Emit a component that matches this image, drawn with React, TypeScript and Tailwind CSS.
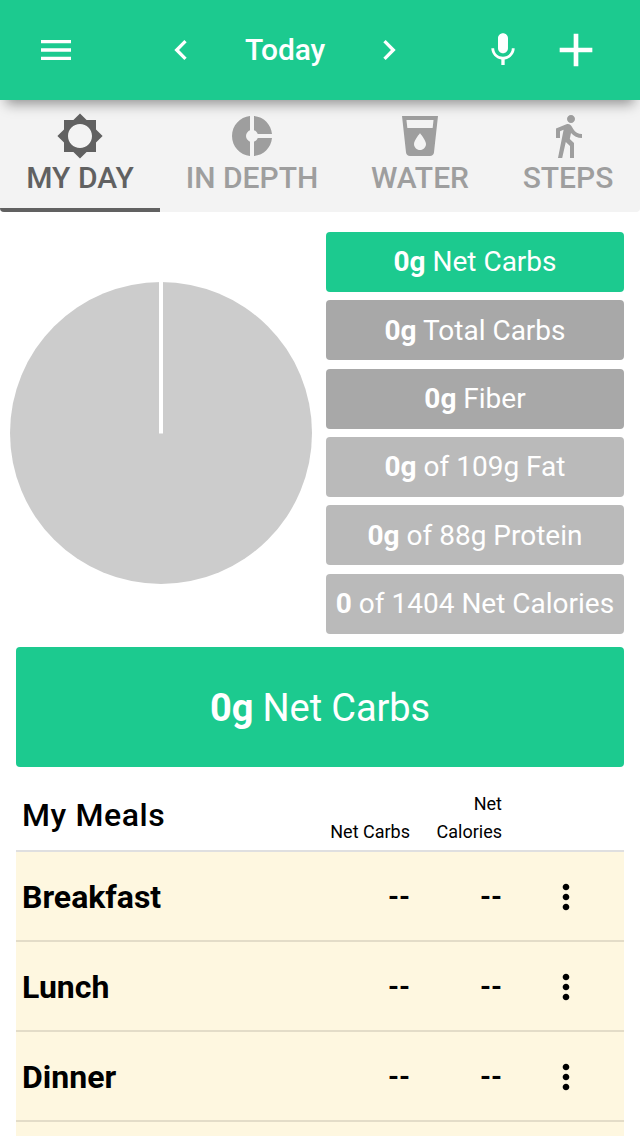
import type { ReactNode } from 'react';
import clsx from 'clsx';
import {
  MdAdd,
  MdBrightness5,
  MdChevronLeft,
  MdChevronRight,
  MdDirectionsWalk,
  MdDonutSmall,
  MdLocalDrink,
  MdMenu,
  MdMic,
  MdMoreVert,
} from 'react-icons/md';

const stats = [
  { value: '0g', label: 'Net Carbs', color: 'bg-[#1cca8f]' },
  { value: '0g', label: 'Total Carbs', color: 'bg-[#a8a8a8]' },
  { value: '0g', label: 'Fiber', color: 'bg-[#a8a8a8]' },
  { value: '0g', label: 'of 109g Fat', color: 'bg-[#bababa]' },
  { value: '0g', label: 'of 88g Protein', color: 'bg-[#bababa]' },
  { value: '0', label: 'of 1404 Net Calories', color: 'bg-[#bababa]' },
];

const meals = ['Breakfast', 'Lunch', 'Dinner'];

function Header() {
  return (
    <header className="relative z-10 flex h-[100px] items-center bg-[#1cca8f] text-white shadow-[0_10px_12px_-6px_rgba(0,0,0,0.4)]">
      <button className="ml-9" aria-label="Menu">
        <MdMenu size={40} />
      </button>
      <button className="ml-[85px]" aria-label="Previous day">
        <MdChevronLeft size={40} />
      </button>
      <h1 className="w-[168px] pb-0.5 text-center text-[30px] font-medium tracking-[-0.2px]">Today</h1>
      <button aria-label="Next day">
        <MdChevronRight size={40} />
      </button>
      <button className="ml-[74px]" aria-label="Voice log">
        <MdMic size={40} />
      </button>
      <button className="ml-[25px]" aria-label="Add food">
        <MdAdd size={56} />
      </button>
    </header>
  );
}

function Tab({ icon, label, width, active }: { icon: ReactNode; label: string; width: string; active?: boolean }) {
  return (
    <button
      className={clsx(
        'flex h-full flex-col items-center border-b-4 pt-3 text-[30px] leading-9 font-medium whitespace-nowrap',
        width,
        active ? 'border-[#616161] text-[#616161]' : 'border-transparent text-[#9e9e9e]',
      )}
    >
      {icon}
      {label}
    </button>
  );
}

function Tabs() {
  return (
    <nav className="flex h-28 overflow-hidden rounded-b bg-[#f3f3f3]">
      <Tab icon={<MdBrightness5 size={48} />} label="MY DAY" width="w-[160px]" active />
      <Tab icon={<MdDonutSmall size={48} />} label="IN DEPTH" width="w-[184px]" />
      <Tab icon={<MdLocalDrink size={48} />} label="WATER" width="w-[152px]" />
      <Tab icon={<MdDirectionsWalk size={48} />} label="STEPS" width="w-[144px]" />
    </nav>
  );
}

function MacroChart() {
  return (
    <svg className="mt-[50px] ml-[10px] h-[302px] w-[302px] shrink-0" viewBox="0 0 302 302">
      <circle cx="151" cy="151" r="151" fill="#cccccc" />
      <path d="M151 0V151.5" stroke="#ffffff" strokeWidth="4" />
    </svg>
  );
}

function Meals() {
  return (
    <section className="mx-4 mt-3">
      <div className="flex h-[73px] items-end border-b-2 border-[#dfdfe0] pb-1 pl-1.5">
        <h2 className="w-[298px] pb-2 text-[32px] leading-[46px] font-medium tracking-[0.6px]">My Meals</h2>
        <span className="w-[90px] text-right text-[18px] leading-7">Net Carbs</span>
        <span className="w-[92px] pl-6 text-right text-[18px] leading-7">Net Calories</span>
      </div>
      {meals.map((meal) => (
        <div
          key={meal}
          className="flex h-[90px] items-center border-b-2 border-[#e3dcc8] bg-[#fef7e0] pt-px pl-1.5 text-[32px] font-bold"
        >
          <span className="w-[298px]">{meal}</span>
          <span className="w-[90px] text-right text-[28px]">--</span>
          <span className="w-[92px] text-right text-[28px]">--</span>
          <button className="ml-11" aria-label={`${meal} options`}>
            <MdMoreVert size={40} />
          </button>
        </div>
      ))}
      <div className="h-[90px] bg-[#fef7e0]" />
    </section>
  );
}

export default function App() {
  return (
    <div className="h-[1136px] w-[640px] overflow-hidden bg-white font-[Roboto,sans-serif] text-black">
      <Header />
      <Tabs />
      <div className="flex h-[435px] pt-5">
        <MacroChart />
        <div className="ml-[14px] flex w-[298px] flex-col gap-[8.35px]">
          {stats.map((stat) => (
            <div
              key={stat.label}
              className={clsx('h-[60px] rounded pt-[0.25px] text-center text-[28px] leading-[60px] text-white', stat.color)}
            >
              <b>{stat.value}</b> {stat.label}
            </div>
          ))}
        </div>
      </div>
      <div className="mx-4 h-[120px] rounded bg-[#1cca8f] pt-px text-center text-[38px] leading-[121px] tracking-[-0.1px] text-white">
        <b>0g</b> Net Carbs
      </div>
      <Meals />
    </div>
  );
}
